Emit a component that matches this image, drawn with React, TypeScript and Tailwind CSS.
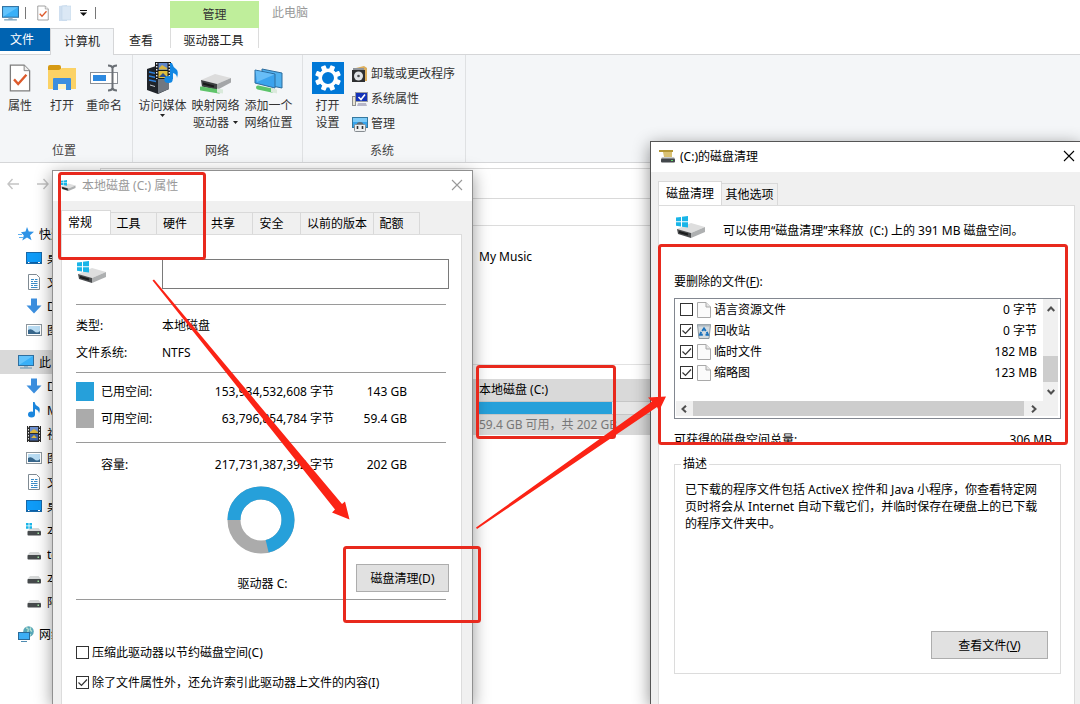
import type { ReactNode } from "react";
import clsx from "clsx";

/* ---------- icons ---------- */

function MonitorIcon({ className }: { className?: string }) {
  return (
    <svg viewBox="0 0 16 16" className={clsx("shrink-0", className)}>
      <rect x="0.5" y="1.5" width="15" height="10" fill="#39b0f8" stroke="#2f6f9f" />
      <path d="M1 2h14L1 11z" fill="#7fd0ff" opacity=".6" />
      <path d="M6 12h4v1.500H6z" fill="#9ab4c6" />
      <path d="M2 14h12" stroke="#5f8fae" />
    </svg>
  );
}

function CheckDocIcon({ className }: { className?: string }) {
  return (
    <svg viewBox="0 0 24 30" className={clsx("shrink-0", className)}>
      <path d="M1.500 1h15l6 6v22h-21z" fill="#fff" stroke="#7d7d7d" strokeWidth="1.400" />
      <path d="M16.500 1v6h6" fill="#eee" stroke="#7d7d7d" />
      <path d="M5.500 16.500l4.500 5L19 11.500" fill="none" stroke="#dd5a2b" strokeWidth="2.600" />
    </svg>
  );
}

function OpenFolderIcon() {
  return (
    <svg viewBox="0 0 28 26" className="h-[26px] w-7">
      <path d="M0 2q0-2 2-2h9q2 0 2 2v3H0z" fill="#d69a14" />
      <path d="M0 5h11l3-2h14v21H0z" fill="#fbd266" />
      <path d="M5 25V14q0-1 1-1h16q1 0 1 1v11h-5v-6h-8v6z" fill="#3b8ee0" />
      <path d="M10 19h8v5h-8z" fill="#fff3c4" />
    </svg>
  );
}

function RenameIcon() {
  return (
    <svg viewBox="0 0 28 28" className="size-7">
      <rect x="0.5" y="8.500" width="27" height="11" fill="#fff" stroke="#8a8f96" />
      <rect x="3" y="11" width="13" height="6" fill="#2d89e0" />
      <path d="M18 1.500q4 0 4.500 2.500q.5-2.500 4.500-2.500M22.500 4v20M18 26.500q4 0 4.500-2.500q.5 2.500 4.500 2.500" fill="none" stroke="#6a6f75" strokeWidth="2" />
    </svg>
  );
}

function MediaIcon() {
  return (
    <svg viewBox="0 0 32 32" className="size-8">
      <path d="M0 7l9-3 13 3v20l-11 5-11-4z" fill="#20242a" />
      <path d="M11 11l11-3v19l-11 4.500z" fill="#707780" />
      <path d="M2 10l7 1.500M2 14l7 1.500M2 18l7 1.500" stroke="#2e7fd8" strokeWidth="1.400" />
      <path d="M3 23l5 1.500" stroke="#c5ccd4" />
      <rect x="8" y="0" width="16" height="17" fill="#17191c" />
      <rect x="11.500" y="1" width="9" height="7" fill="#5f86c9" />
      <rect x="11.500" y="9" width="9" height="7" fill="#e0bd3c" />
      <path d="M12 6l3-3 5 3v1.500h-8z" fill="#d9b640" />
      <path d="M12 15l4-4 4 4z" fill="#2d4f8d" />
      <path d="M9.700 1v16M22.300 1v16" stroke="#e7ebef" strokeWidth="1.400" strokeDasharray="1.500 1.500" />
      <ellipse cx="21.500" cy="17.500" rx="4.200" ry="3.500" fill="#1287e3" />
      <path d="M23 17V1h2q1 4 4 6t1 9q0-4-4-5v6z" fill="#1287e3" />
    </svg>
  );
}

function MapDriveIcon() {
  return (
    <svg viewBox="0 0 32 20" className="h-5 w-8">
      <path d="M1 6L15 0l16 4-14 6z" fill="#dcdcdc" />
      <path d="M1 6l16 4v6L2 12.500z" fill="#3d4042" />
      <path d="M17 10l14-6v4.500L17 16z" fill="#a4a6a8" />
      <path d="M3 9.500l11 3" stroke="#18191a" strokeWidth="2" />
      <path d="M1 14.500l18 3" stroke="#5fc46a" strokeWidth="4" strokeLinecap="round" />
      <path d="M17 14.500l6 1v4l-6-1z" fill="#d9eadb" />
    </svg>
  );
}

function NetworkPlaceIcon() {
  return (
    <svg viewBox="0 0 30 26" className="h-[26px] w-[30px]">
      <path d="M8 1l20 4v15l-20-4z" fill="#4fb0ee" stroke="#2d6c9d" />
      <path d="M1 2l20 4v14L1 15z" fill="#3aa3ee" stroke="#2d6c9d" />
      <path d="M1.500 2.500l19 4L3 14z" fill="#7cc9fb" opacity=".7" />
      <path d="M4 19.500l14 3" stroke="#5cc46a" strokeWidth="4" strokeLinecap="round" />
      <path d="M17 20l6 1.500v4L17 24z" fill="#dbe9dc" />
    </svg>
  );
}

function SettingsIcon() {
  return (
    <svg viewBox="0 0 32 32" className="size-8">
      <rect width="32" height="32" fill="#0078d7" />
      <g fill="#fff">
        {[22.5, 67.5, 112.5, 157.5, 202.5, 247.5, 292.5, 337.5].map((a) => (
          <rect key={a} x="13.500" y="3" width="5" height="6" rx="1" transform={`rotate(${a} 16 16)`} />
        ))}
      </g>
      <circle cx="16" cy="16" r="7.800" fill="none" stroke="#fff" strokeWidth="3.600" />
    </svg>
  );
}

function UninstallIcon() {
  return (
    <svg viewBox="0 0 16 16" className="size-4">
      <path d="M4 2l8-2 3 2v13H6z" fill="#dcae5c" />
      <path d="M1 2h11v5H1z" fill="#8f9499" />
      <rect x="0" y="4" width="13" height="12" fill="#2d2f31" />
      <circle cx="6.500" cy="10" r="4.500" fill="#dfe3e6" />
      <circle cx="6.500" cy="10" r="1.300" fill="#4a4d50" />
    </svg>
  );
}

function SystemPropsIcon() {
  return (
    <svg viewBox="0 0 16 16" className="size-4">
      <rect x="3.500" y="1.500" width="12" height="9" fill="#1432b8" stroke="#9a9da3" />
      <path d="M6.500 6l2.500 2.500L13 3.500" fill="none" stroke="#fff" strokeWidth="1.600" />
      <path d="M6 12h8l1 3H5z" fill="#b7b7c9" />
      <rect x="0.500" y="5.500" width="3" height="9" fill="#e7e3d2" stroke="#8f8f8f" />
    </svg>
  );
}

function ManageIcon() {
  return (
    <svg viewBox="0 0 16 16" className="size-4">
      <rect x="0.500" y="1.500" width="15" height="10" fill="#35a4ec" stroke="#35789f" />
      <path d="M1 2h14v4H1z" fill="#7ccbf8" />
      <path d="M5 7q3-2 6 0v2H5z" fill="#5c6c78" />
      <rect x="2.500" y="8.500" width="11" height="7" rx="1" fill="#eef0f1" stroke="#868c91" />
      <path d="M5.500 10v3M10.500 10v3" stroke="#333" strokeWidth="1.600" />
    </svg>
  );
}

function WindowsDriveIcon({ className }: { className?: string }) {
  return (
    <svg viewBox="0 0 30 22" className={clsx("shrink-0", className)}>
      <path d="M1 13l14-6 14 4-14 6z" fill="#dedede" />
      <path d="M1 13l14 4v5L2 18z" fill="#4a4c4e" />
      <path d="M15 17l14-6v5l-14 6z" fill="#aeb0b1" />
      <path d="M3 16l9 2.500" stroke="#1b1c1d" strokeWidth="2" />
      <path d="M0 1.500L5 1v4.200H0zM6 .8L12 0v5.200H6zM0 6.200h5v4.400l-5-.8zM6 6.200h6v5.400l-6-.9z" fill="#19b5e8" />
    </svg>
  );
}

function CleanupIcon() {
  return (
    <svg viewBox="0 0 16 13" className="h-[13px] w-4 shrink-0">
      <path d="M0 0h14v2H0z" fill="#b39636" />
      <path d="M4 2h9v5H5z" fill="#d9c173" />
      <path d="M3 7h12l1 2H2z" fill="#c9cbcc" />
      <rect x="2" y="8.500" width="14" height="4" rx="1" fill="#43474b" />
      <rect x="12" y="10" width="2" height="1" fill="#62d96b" />
    </svg>
  );
}

function StarIcon() {
  return (
    <svg viewBox="0 0 16 16" className="size-4 shrink-0">
      <path d="M9 1l1.800 4.600 5.200.2-4 3.400 1.500 5-4.500-2.800-4.700 3 1.500-5L3 6.200l4.500-.6z" fill="#2f93e6" />
      <path d="M0 8.500h4M1 11.500h4" stroke="#5fb0f0" />
    </svg>
  );
}

function DesktopIcon() {
  return (
    <svg viewBox="0 0 16 16" className="size-4 shrink-0">
      <rect x="0.500" y="2.500" width="15" height="11" fill="#0f9bf7" stroke="#1768a8" />
      <path d="M1 12.500h14" stroke="#0a5fa8" />
      <path d="M2 12.500h1.500M12 12.500h2" stroke="#fff" />
    </svg>
  );
}

function DocumentIcon() {
  return (
    <svg viewBox="0 0 16 16" className="size-4 shrink-0">
      <path d="M2.500.5h8l3 3v12h-11z" fill="#fff" stroke="#7f8a93" />
      <path d="M5 5.500h3M5 7.500h2M9 5.500h2.500M8 7.500h3.500M5 9.500h6.500M5 11.500h2M8 11.500h3.500M5 13.500h6.500" stroke="#3a8cc8" />
    </svg>
  );
}

function DownloadIcon() {
  return (
    <svg viewBox="0 0 16 16" className="size-4 shrink-0">
      <path d="M5 0.500h6v7h4.500L8 15.500.5 7.500H5z" fill="#3b8ede" />
    </svg>
  );
}

function PictureIcon() {
  return (
    <svg viewBox="0 0 16 16" className="size-4 shrink-0">
      <rect x="0.500" y="2.500" width="15" height="11" fill="#fff" stroke="#8d979e" />
      <rect x="2" y="4" width="12" height="8" fill="#b9dcf3" />
      <path d="M2 8q3-2 6 1t6 0v3H2z" fill="#37668b" />
    </svg>
  );
}

function MusicIcon() {
  return (
    <svg viewBox="0 0 16 16" className="size-4 shrink-0">
      <ellipse cx="5.500" cy="12.500" rx="3.500" ry="3" fill="#1a86dd" />
      <path d="M7 12.500V0h1.500q.5 3 3.500 4.500t1 7Q13 8 9 7v5.500z" fill="#1a86dd" />
    </svg>
  );
}

function VideoIcon() {
  return (
    <svg viewBox="0 0 16 16" className="size-4 shrink-0">
      <rect x="1" y="0" width="14" height="16" fill="#2b2b2b" />
      <rect x="4" y="1" width="8" height="6" fill="#6c8fd0" />
      <rect x="4" y="8" width="8" height="6.500" fill="#4063a8" />
      <path d="M4 6l4-3 4 3v1H4zM5 12l3-3 3 3z" fill="#dbb53c" />
      <path d="M2.500 0v16M13.500 0v16" stroke="#e8e8e8" strokeDasharray="1.500 1.500" />
    </svg>
  );
}

function DriveIcon({ system }: { system?: boolean }) {
  return (
    <svg viewBox="0 0 16 16" className="size-4 shrink-0">
      <path d="M4 6h8.500l2.500 3H1.500z" fill="#d7d9d9" />
      <rect x="1.500" y="9" width="13.500" height="4.500" rx=".8" fill="#45494b" />
      <rect x="11.500" y="10.500" width="1.500" height="1.500" fill="#9fe3a2" />
      {system && <path d="M0 1h2.600v2.500H0zM3.400 1H6v2.500H3.400zM0 4.300h2.600v2.500H0zM3.400 4.300H6v2.500H3.400z" fill="#19b5e8" />}
    </svg>
  );
}

function NetworkIcon() {
  return (
    <svg viewBox="0 0 16 16" className="size-4 shrink-0">
      <circle cx="10.500" cy="5.500" r="5.300" fill="#58a7b8" />
      <path d="M8 2q3 0 2 3t3 4M13 1.500q-2 2 1 4" fill="none" stroke="#b7e2d2" strokeWidth="1.300" />
      <rect x="0.500" y="6.500" width="11" height="7" fill="#3caef5" stroke="#2a6b99" />
      <path d="M3 15.500h6" stroke="#4e8bb0" />
    </svg>
  );
}

function FileIcon() {
  return (
    <svg viewBox="0 0 14 16" className="h-4 w-3.5 shrink-0">
      <path d="M.5.500h8.500l4.500 4.500v10.500H.5z" fill="#fbfbfb" stroke="#a9a9a9" />
      <path d="M9 .5V5h4.500" fill="#e6e6e6" stroke="#a9a9a9" />
    </svg>
  );
}

function RecycleIcon() {
  return (
    <svg viewBox="0 0 14 16" className="h-4 w-3.5 shrink-0">
      <path d="M.5 1.500h13l-1.500 14H2z" fill="#d3dbe0" stroke="#8b969d" />
      <path d="M1 1.500h12v2H1z" fill="#aeb8bf" />
      <path d="M5.200 8L7 5.500 8.800 8M9.800 8.800l1.200 3H8.500M5.800 11.800H3l1.200-3" fill="none" stroke="#1a72bd" strokeWidth="1.900" />
    </svg>
  );
}

function CloseIcon() {
  return (
    <svg viewBox="0 0 12 12" className="size-3">
      <path d="M1 1l10 10M11 1L1 11" stroke="currentColor" strokeWidth="1.100" />
    </svg>
  );
}

function Chevron({ className }: { className?: string }) {
  return (
    <svg viewBox="0 0 8 8" className={clsx("size-2", className)}>
      <path d="M.7 6L4 2.500 7.300 6" fill="none" stroke="#505050" strokeWidth="2" />
    </svg>
  );
}

function Caret() {
  return (
    <svg viewBox="0 0 5 3" className="h-[3px] w-[5px]">
      <path d="M0 0h5L2.500 3z" fill="#222" />
    </svg>
  );
}

/* ---------- shared controls ---------- */

function Checkbox({ id, checked }: { id: string; checked?: boolean | undefined }) {
  return (
    <span className="grid size-[13px] shrink-0">
      <input
        id={id}
        type="checkbox"
        defaultChecked={checked}
        className="peer size-[13px] appearance-none border border-[#333] bg-white [grid-area:1/1]"
      />
      <svg viewBox="0 0 13 13" className="pointer-events-none invisible size-[13px] [grid-area:1/1] peer-checked:visible">
        <path d="M2.500 6.500l3 3L11 3.500" fill="none" stroke="#333" strokeWidth="1.200" />
      </svg>
    </span>
  );
}

function Tab({ active, className, children }: { active?: boolean; className?: string; children: ReactNode }) {
  return (
    <button
      type="button"
      role="tab"
      aria-selected={!!active}
      className={clsx(
        "border-t border-r border-[#d9d9d9] whitespace-nowrap",
        active ? "-mb-px h-[25px] border-l bg-white pb-0.5" : "h-[22px] bg-[#f0f0f0]",
        className,
      )}
    >
      {children}
    </button>
  );
}

/* ---------- explorer ---------- */

function RibbonButton({ icon, className, children }: { icon: ReactNode; className?: string; children: ReactNode }) {
  return (
    <button type="button" className={clsx("flex flex-col items-center gap-[3px] whitespace-nowrap", className)}>
      <span className="flex h-8 items-center">{icon}</span>
      <span className="flex flex-col items-center">{children}</span>
    </button>
  );
}

function RibbonGroup({ title, className, children }: { title: string; className?: string; children: ReactNode }) {
  return (
    <section className={clsx("flex flex-col justify-between border-r border-[#dfe1e3] pt-[7px] pb-[3px]", className)}>
      <div className="flex">{children}</div>
      <h2 className="pr-1 text-center text-[#444]">{title}</h2>
    </section>
  );
}

const systemActions = [
  { label: "卸载或更改程序", icon: <UninstallIcon /> },
  { label: "系统属性", icon: <SystemPropsIcon /> },
  { label: "管理", icon: <ManageIcon /> },
];

function Ribbon() {
  return (
    <div className="flex h-[108px] border-b border-[#d5d6d8] bg-[#f4f6f8] text-[#333]">
      <RibbonGroup title="位置" className="w-[133px]">
        <RibbonButton icon={<CheckDocIcon className="h-7 w-[22px]" />} className="w-10">属性</RibbonButton>
        <RibbonButton icon={<OpenFolderIcon />} className="w-11">打开</RibbonButton>
        <RibbonButton icon={<RenameIcon />} className="w-10">重命名</RibbonButton>
      </RibbonGroup>
      <RibbonGroup title="网络" className="w-[170px] pl-[3px]">
        <RibbonButton icon={<MediaIcon />} className="w-[53px]">
          访问媒体
          <Caret />
        </RibbonButton>
        <RibbonButton icon={<span className="pt-3"><MapDriveIcon /></span>} className="w-[53px]">
          <span>映射网络</span>
          <span className="flex items-center gap-1">驱动器 <Caret /></span>
        </RibbonButton>
        <RibbonButton icon={<span className="pt-1.5"><NetworkPlaceIcon /></span>} className="w-[53px]">
          <span>添加一个</span>
          <span>网络位置</span>
        </RibbonButton>
      </RibbonGroup>
      <RibbonGroup title="系统" className="w-[163px]">
        <RibbonButton icon={<SettingsIcon />} className="w-[49px]">
          <span>打开</span>
          <span>设置</span>
        </RibbonButton>
        <div className="flex flex-col">
          {systemActions.map((a) => (
            <button key={a.label} type="button" className="flex h-[25px] items-center gap-[3px] pb-0.5">
              {a.icon}
              {a.label}
            </button>
          ))}
        </div>
      </RibbonGroup>
    </div>
  );
}

const places = [
  {
    label: "快速访问",
    icon: <StarIcon />,
    children: [
      { label: "桌面", icon: <DesktopIcon /> },
      { label: "文档", icon: <DocumentIcon /> },
      { label: "Downloads", icon: <DownloadIcon /> },
      { label: "图片", icon: <PictureIcon /> },
    ],
  },
  {
    label: "此电脑",
    icon: <MonitorIcon className="size-4" />,
    selected: true,
    children: [
      { label: "Downloads", icon: <DownloadIcon /> },
      { label: "Music", icon: <MusicIcon /> },
      { label: "视频", icon: <VideoIcon /> },
      { label: "图片", icon: <PictureIcon /> },
      { label: "文档", icon: <DocumentIcon /> },
      { label: "桌面", icon: <DesktopIcon /> },
      { label: "本地磁盘", icon: <DriveIcon system /> },
      { label: "te", icon: <DriveIcon /> },
      { label: "本地磁盘", icon: <DriveIcon /> },
      { label: "阿", icon: <DriveIcon /> },
    ],
  },
  { label: "网络", icon: <NetworkIcon />, children: [] },
];

function Sidebar() {
  return (
    <nav className="flex w-[53px] shrink-0 flex-col gap-2 overflow-hidden pt-[23px] whitespace-nowrap">
      {places.map((place) => (
        <div key={place.label}>
          <a href="#" className={clsx("flex h-6 items-center gap-[5px] pl-[18px]", place.selected && "bg-[#d9d9d9]")}>
            {place.icon}
            <span className="min-w-0 overflow-hidden">{place.label}</span>
          </a>
          {place.children.map((child, i) => (
            <a key={i} href="#" className="flex h-6 items-center gap-[5px] pl-[26px]">
              {child.icon}
              <span className="min-w-0 overflow-hidden">{child.label}</span>
            </a>
          ))}
        </div>
      ))}
    </nav>
  );
}

function Explorer() {
  return (
    <div className="flex flex-col">
      <header className="flex h-7 items-stretch">
        <div className="flex w-[170px] items-center pb-0.5 pl-0.5">
          <MonitorIcon className="size-[17px]" />
          <span className="ml-1.5 h-3 w-px bg-[#777]" />
          <CheckDocIcon className="ml-[11px] h-4 w-3" />
          <svg viewBox="0 0 12 16" className="ml-2.5 h-4 w-3">
            <path d="M0 1l8-1v16H0z" fill="#cfdff0" />
            <path d="M3 1h9v14H3z" fill="#dbe8f5" stroke="#c3d6ea" strokeWidth=".6" />
          </svg>
          <svg viewBox="0 0 7 6" className="ml-[9px] h-1.5 w-[7px]">
            <path d="M0 .5h7" stroke="#111" />
            <path d="M0 2.500h7L3.500 6z" fill="#111" />
          </svg>
          <span className="ml-2 h-3 w-px bg-[#777]" />
        </div>
        <div className="mt-px flex w-[89px] items-center justify-center bg-[#bfee9b] text-[#333]">管理</div>
        <h1 className="ml-[13px] leading-[25px] text-[#999]">此电脑</h1>
      </header>
      <div role="tablist" className="flex h-[27px] border-b border-[#d5d6d8] text-[#222]">
        <button type="button" role="tab" className="h-[23px] w-[50px] bg-[#0063b1] pr-1.5 text-white">文件</button>
        <button type="button" role="tab" aria-selected="true" className="-mb-px w-16 border border-b-0 border-[#d5d6d8] bg-[#f4f6f8] pb-0.5">
          计算机
        </button>
        <button type="button" role="tab" className="w-14 pr-0.5 pb-0.5">查看</button>
        <button type="button" role="tab" className="mb-1.5 w-[89px] border-x border-[#dcdcdc] pt-1 pr-0.5">驱动器工具</button>
      </div>
      <Ribbon />
      <div className="flex h-9 pt-[5px]">
        <div className="flex w-[100px] gap-[18px] pt-2.5 pl-[7px] text-[#c4c4c4]">
          <svg viewBox="0 0 12 12" className="size-3"><path d="M12 6H1M5.500 1L1 6l4.500 5" fill="none" stroke="currentColor" strokeWidth="1.400" /></svg>
          <svg viewBox="0 0 12 12" className="size-3"><path d="M0 6h11M6.500 1L11 6l-4.500 5" fill="none" stroke="currentColor" strokeWidth="1.400" /></svg>
        </div>
        <div className="flex-1 border border-[#d9d9d9]" />
      </div>
      <div className="flex">
        <Sidebar />
        <main className="flex-1 pl-[147px]">
          <div className="h-[27px] border-b border-[#dcdcdc]" />
          <div className="h-[139px] border-b border-[#e2e2e2] pt-[22px] pl-[279px]">My Music</div>
          <div className="mt-3.5 ml-[200px] w-[280px] bg-[#d9d9d9] pl-[79px]">
            <p className="leading-[22px]">本地磁盘 (C:)</p>
            <div className="h-3.5 w-[188px] border-y border-[#c6c6c6] bg-[#e6e6e6]">
              <div className="h-full w-[71%] bg-[#26a0da]" />
            </div>
            <p className="leading-5 whitespace-nowrap text-[#777]">59.4 GB 可用，共 202 GB</p>
          </div>
        </main>
      </div>
    </div>
  );
}

/* ---------- drive properties ---------- */

function Rule({ className }: { className?: string }) {
  return <hr className={clsx("mr-[3px] border-[#9a9a9a]", className)} />;
}

function SpaceRow({ color, label, bytes, size }: { color?: string; label: string; bytes: string; size: string }) {
  return (
    <div className="grid h-[27px] grid-cols-[25px_86px_147px_73px] items-center">
      <span className={clsx("h-[19px] w-[18px]", color)} />
      <span>{label}</span>
      <span className="text-right whitespace-nowrap">{bytes}</span>
      <span className="text-right">{size}</span>
    </div>
  );
}

function UsageDonut() {
  const c = 2 * Math.PI * 27;
  return (
    <svg viewBox="0 0 68 68" className="size-[68px]">
      <circle cx="34" cy="34" r="27" fill="none" stroke="#ababab" strokeWidth="13" />
      <circle
        cx="34"
        cy="34"
        r="27"
        fill="none"
        stroke="#26a0da"
        strokeWidth="13"
        strokeDasharray={`${c * 0.71} ${c}`}
        transform="rotate(180 34 34)"
      />
    </svg>
  );
}

function PropertiesWindow() {
  return (
    <div className="absolute top-[170px] bottom-0 left-[52px] flex w-[421px] flex-col border border-b-0 border-[#909090] bg-[#f0f0f0] shadow-[0_4px_16px_rgba(0,0,0,0.4)]">
      <div className="flex h-[30px] shrink-0 items-center bg-white pr-[9px] pb-0.5 pl-2 text-[#999]">
        <WindowsDriveIcon className="h-[11px] w-[15px]" />
        <h2 className="ml-1.5 flex-1">本地磁盘 (C:) 属性</h2>
        <button type="button" aria-label="关闭"><CloseIcon /></button>
      </div>
      <div role="tablist" className="flex items-end pt-[9px] pl-2">
        <Tab active className="w-[50px] pr-3">常规</Tab>
        <Tab className="w-[46px] pr-2.5">工具</Tab>
        <Tab className="w-[47px] pr-2.5">硬件</Tab>
        <Tab className="w-[49px] pr-2.5">共享</Tab>
        <Tab className="w-12 pr-2.5">安全</Tab>
        <Tab className="w-[73px]">以前的版本</Tab>
        <Tab className="w-[46px] pr-2.5">配额</Tab>
      </div>
      <div className="mr-2.5 ml-2 flex-1 border border-b-0 border-[#dcdcdc] bg-white pt-6 pr-3 pl-3.5">
        <div className="flex h-[30px]">
          <WindowsDriveIcon className="mt-0.5 ml-px h-[22px] w-[30px]" />
          <input type="text" aria-label="卷标" className="ml-[55px] h-[30px] min-w-0 flex-1 border border-[#7a7a7a] px-1" />
        </div>
        <Rule className="mt-[15px]" />
        <dl className="mt-[7px] mb-1.5 grid auto-rows-[27px] grid-cols-[86px_1fr] items-center">
          <dt>类型:</dt>
          <dd>本地磁盘</dd>
          <dt>文件系统:</dt>
          <dd>NTFS</dd>
        </dl>
        <Rule />
        <div className="mt-[5px] mb-2.5">
          <SpaceRow color="bg-[#26a0da]" label="已用空间:" bytes="153,934,532,608 字节" size="143 GB" />
          <SpaceRow color="bg-[#ababab]" label="可用空间:" bytes="63,796,854,784 字节" size="59.4 GB" />
        </div>
        <Rule />
        <div className="mt-2 mb-2">
          <SpaceRow label="容量:" bytes="217,731,387,392 字节" size="202 GB" />
        </div>
        <div className="flex justify-center pr-[3px]">
          <UsageDonut />
        </div>
        <div className="mt-2.5 mb-[7px] grid h-7 grid-cols-[1fr_auto_1fr]">
          <span className="col-start-2 self-end">驱动器 C:</span>
          <button type="button" className="w-[93px] justify-self-end border border-[#adadad] bg-[#e1e1e1]">磁盘清理(D)</button>
        </div>
        <Rule />
        <div className="mt-[37px]">
          <div className="flex h-[30px] items-center gap-[3px]">
            <Checkbox id="compress" />
            <label htmlFor="compress">压缩此驱动器以节约磁盘空间(C)</label>
          </div>
          <div className="flex h-[30px] items-center gap-[3px]">
            <Checkbox id="index" checked />
            <label htmlFor="index">除了文件属性外，还允许索引此驱动器上文件的内容(I)</label>
          </div>
        </div>
      </div>
    </div>
  );
}

/* ---------- disk cleanup ---------- */

const cleanupFiles = [
  { id: "lang", label: "语言资源文件", size: "0 字节", icon: <FileIcon /> },
  { id: "bin", label: "回收站", size: "0 字节", checked: true, icon: <RecycleIcon /> },
  { id: "temp", label: "临时文件", size: "182 MB", checked: true, icon: <FileIcon /> },
  { id: "thumb", label: "缩略图", size: "123 MB", checked: true, icon: <FileIcon /> },
];

function FileList() {
  return (
    <div className="flex h-[121px] flex-col border border-[#828790] pr-0.5 pb-0.5">
      <div className="flex flex-1">
        <ul className="flex-1 pr-[6px] pl-[5px]">
          {cleanupFiles.map((f) => (
            <li key={f.id} className="flex h-[21px] items-center">
              <Checkbox id={f.id} checked={f.checked} />
              <span className="ml-1">{f.icon}</span>
              <label htmlFor={f.id} className="ml-[3px] flex-1">{f.label}</label>
              <span>{f.size}</span>
            </li>
          ))}
        </ul>
        <div className="flex w-[15px] flex-col items-center bg-[#f0f0f0] pt-1.5 pb-[5px]">
          <Chevron />
          <span className="mt-auto mb-1.5 h-[26px] w-full bg-[#cdcdcd]" />
          <Chevron className="rotate-180" />
        </div>
      </div>
      <div className="ml-px flex h-[15px] items-center bg-[#f0f0f0] pr-5">
        <Chevron className="mr-[5px] ml-1 -rotate-90" />
        <span className="h-full flex-1 bg-[#cdcdcd]" />
        <Chevron className="ml-1.5 rotate-90" />
      </div>
    </div>
  );
}

function CleanupWindow() {
  return (
    <div className="absolute top-[141px] right-0 bottom-0 left-[650px] flex flex-col border-t border-l border-[#555] bg-[#f0f0f0] shadow-[0_4px_16px_rgba(0,0,0,0.45)]">
      <div className="flex h-[30px] shrink-0 items-center bg-white pr-[5px] pb-0.5 pl-2">
        <CleanupIcon />
        <h2 className="ml-[5px] flex-1">(C:)的磁盘清理</h2>
        <button type="button" aria-label="关闭"><CloseIcon /></button>
      </div>
      <div role="tablist" className="flex items-end pt-[9px] pl-[7px]">
        <Tab active className="w-16">磁盘清理</Tab>
        <Tab className="w-14">其他选项</Tab>
      </div>
      <div className="mr-[5px] ml-[7px] flex-1 border border-b-0 border-[#dcdcdc] bg-white pr-[13px] pl-[15px]">
        <div className="flex h-[60px] items-start gap-[17px] pt-2.5 pl-0.5">
          <WindowsDriveIcon className="h-[22px] w-[30px]" />
          <p className="pt-1.5 whitespace-pre">可以使用“磁盘清理”来释放  (C:) 上的 391 MB 磁盘空间。</p>
        </div>
        <p className="leading-8">要删除的文件(<u>F</u>):</p>
        <FileList />
        <div className="flex h-[37px] items-center justify-between pt-[3px] pr-[9px]">
          <span>可获得的磁盘空间总量:</span>
          <span>306 MB</span>
        </div>
        <fieldset className="border border-[#dcdcdc] px-[10px]">
          <legend className="-ml-1 px-0.5 leading-4">描述</legend>
          <div className="flex h-[201px] flex-col justify-between pt-[9px] pb-3.5">
            <p className="pr-2">
              已下载的程序文件包括 ActiveX 控件和 Java 小程序，你查看特定网页时将会从 Internet 自动下载它们，并临时保存在硬盘上的已下载的程序文件夹中。
            </p>
            <button type="button" className="mr-0.5 h-7 w-[117px] self-end border border-[#adadad] bg-[#e1e1e1]">
              查看文件(<u>V</u>)
            </button>
          </div>
        </fieldset>
      </div>
    </div>
  );
}

/* ---------- red mark-up over the windows ---------- */

function Annotations() {
  return (
    <svg width="1080" height="704" viewBox="0 0 1080 704" className="pointer-events-none absolute top-0 left-0">
      <g fill="none" stroke="#e8291d" strokeWidth="3">
        <rect x="59.500" y="173.500" width="145" height="85" rx="2" />
        <rect x="344.500" y="547.500" width="135" height="74" rx="2" />
        <rect x="477.500" y="366.500" width="137" height="71" rx="2" />
        <rect x="659.500" y="245.500" width="407" height="198" rx="2" />
      </g>
      <g fill="#fb2315">
        <path d="M152.500 280.500l1.500-1L342 504l3-2.500 4.500 18-17.500-7 3-3z" />
        <path d="M476 527.500l176-126-4-4 18-1-7 14.500-2-4-180 122z" />
      </g>
    </svg>
  );
}

export default function App() {
  return (
    <div className="relative min-h-screen overflow-hidden bg-white font-['Noto_Sans','Noto_Sans_CJK_SC',sans-serif] text-[12px] leading-[17px] text-black">
      <Explorer />
      <PropertiesWindow />
      <CleanupWindow />
      <Annotations />
    </div>
  );
}
